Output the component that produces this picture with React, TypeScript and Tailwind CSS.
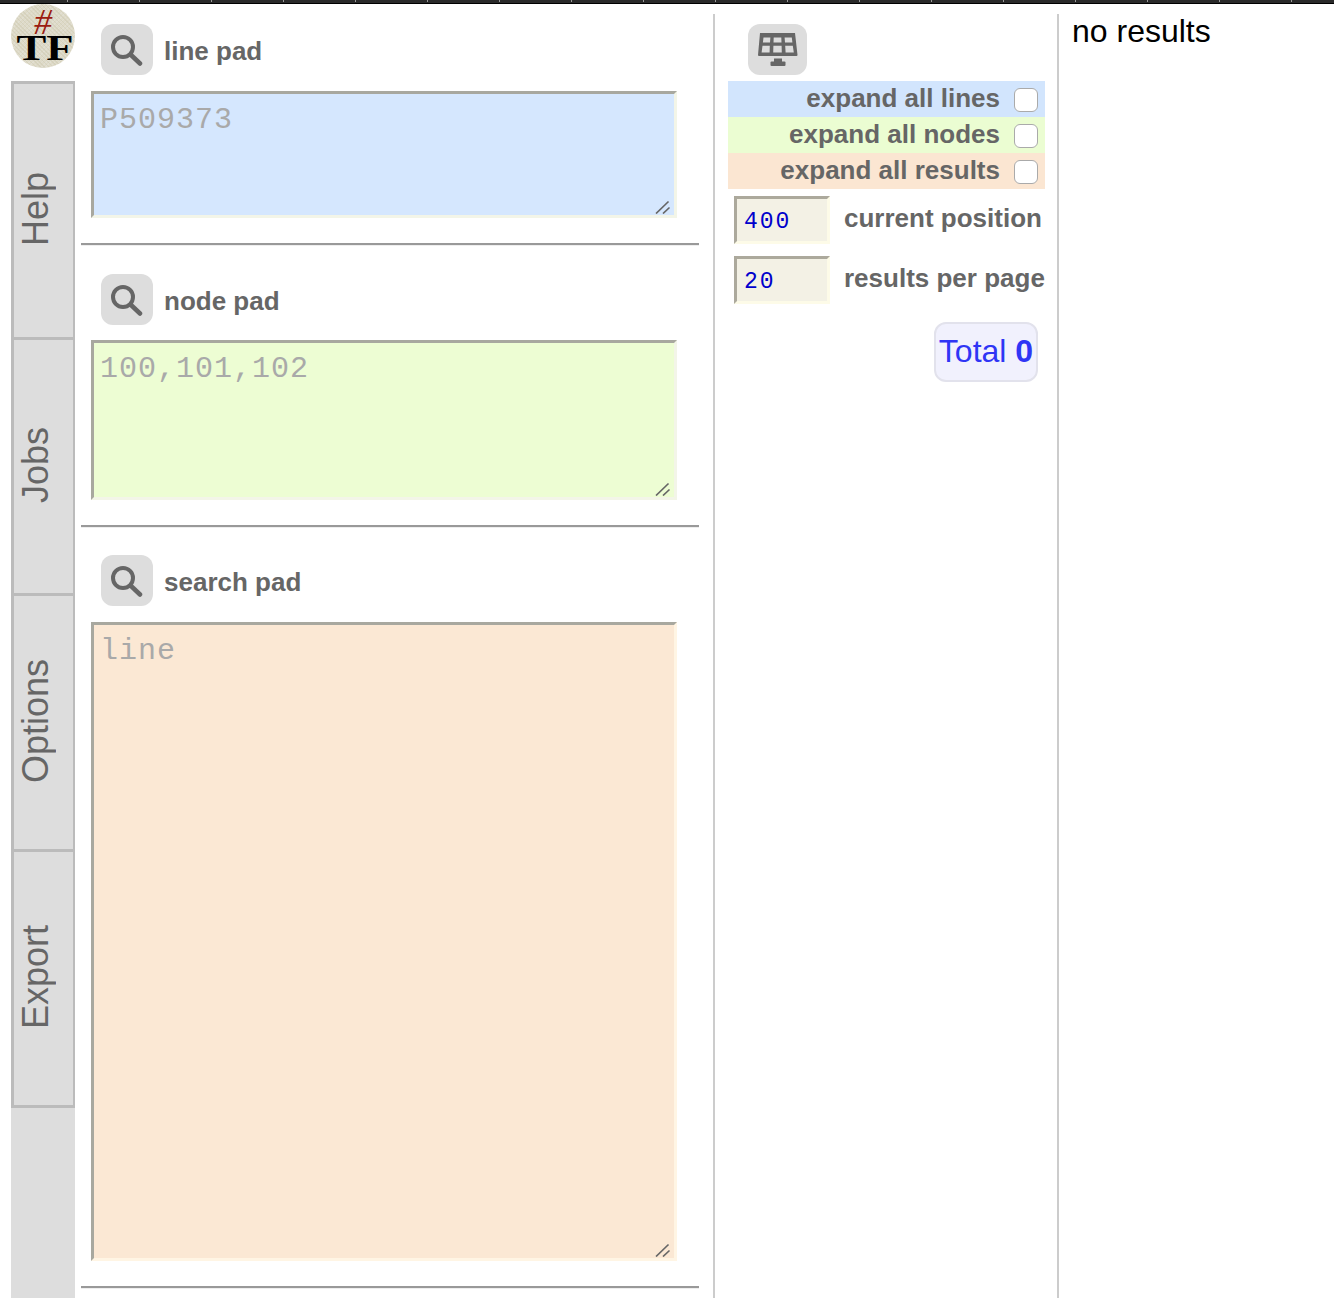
import React from 'react';

const TABS = ['Help', 'Jobs', 'Options', 'Export'];
const TICKS = Array.from({ length: 18 }, (_, i) => 67 + i * 72);

function SearchIcon() {
  return (
    <svg viewBox="0 0 32 32" className="w-[32px] h-[32px]" fill="none" stroke="#666">
      <circle cx="12" cy="13" r="10" strokeWidth="4" />
      <path d="M19.5 20.5 L29 29.5" strokeWidth="4.5" strokeLinecap="round" />
    </svg>
  );
}

function PanelIcon() {
  return (
    <svg viewBox="0 0 40 34" className="w-[40px] h-[34px]" fill="#666">
      <path fillRule="evenodd" d="M2 0 H37 L39.5 22 Q39.5 23 38.5 23 H1 Q0 23 0 22 Z M5.5 4.5 L4.9 9.5 H12 L12.4 4.5 Z M15.7 4.5 L15.5 9.5 H23.5 L23.3 4.5 Z M26.6 4.5 L27 9.5 H34.4 L33.8 4.5 Z M4.5 12.8 L3.6 19.5 H11.6 L11.8 12.8 Z M15.4 12.8 L15.2 19.5 H23.8 L23.6 12.8 Z M27.2 12.8 L27.6 19.5 H35.8 L34.8 12.8 Z" />
      <rect x="16" y="25.5" width="8" height="3.5" />
      <rect x="12.5" y="28.5" width="15" height="4.5" rx="1" />
    </svg>
  );
}

function ResizeGrip() {
  return (
    <svg viewBox="0 0 16 14" className="absolute right-[6px] bottom-[4px] w-[16px] h-[14px] pointer-events-none" fill="none" stroke="#666" strokeWidth="1.7">
      <path d="M1 13.5 L13.5 1.5" />
      <path d="M8 13.5 L14.5 7.5" />
    </svg>
  );
}

function Logo() {
  return (
    <div className="relative w-[64px] h-[64px] rounded-full bg-[repeating-linear-gradient(45deg,#cdc9b080_0px,#cdc9b080_1px,transparent_1px,transparent_3px),repeating-linear-gradient(-45deg,#c4bfa580_0px,#c4bfa580_1px,#dedac8_1px,#dedac8_3px)] flex justify-center">
      <span className="absolute top-[6px] text-[36px] leading-[24px] italic text-[#9b1c10] font-['Liberation_Serif',serif]">#</span>
      <span className="absolute top-[32px] left-[11px] text-[36px] leading-[24px] font-bold text-black scale-x-[1.24] font-['Liberation_Serif',serif]">TF</span>
    </div>
  );
}

function Pad({ label, placeholder, box }: { label: string; placeholder: string; box: string }) {
  return (
    <section>
      <div className="flex items-start h-[52px] pl-[20px] gap-[11px]">
        <button className="w-[52px] h-[51px] rounded-[12px] bg-[#ddd] flex items-center justify-center">
          <SearchIcon />
        </button>
        <span className="mt-[13px] text-[26px] leading-[28px] font-bold text-[#666] font-['Liberation_Sans',sans-serif]">{label}</span>
      </div>
      <div className="relative ml-[10px] w-[586px]">
        <textarea
          placeholder={placeholder}
          className={`block w-full ${box} border-[3px] border-solid border-t-[#a8a89f] border-l-[#a8a89f] px-[6px] py-[10px] text-[30px] leading-[33px] font-['Liberation_Mono',monospace] tracking-[1px] placeholder:text-[#a9a9a9] outline-none resize-none`}
        />
        <ResizeGrip />
      </div>
      <div className="mt-[25px] w-[618px] h-[3px] border-t-2 border-t-[#999] border-b border-b-[#eee]" />
    </section>
  );
}

function Expand({ label, bg }: { label: string; bg: string }) {
  return (
    <label className={`flex items-center justify-end h-[36px] ${bg}`}>
      <span className="text-[26px] leading-none font-bold text-[#666] font-['Liberation_Sans',sans-serif] mt-[-3px]">{label}</span>
      <span className="ml-[14px] mr-[7px] mt-[2px] w-[24px] h-[24px] rounded-[6px] bg-white border border-[#aaa] block" />
    </label>
  );
}

function Field({ value, label }: { value: string; label: string }) {
  return (
    <div className="flex items-start h-[60px] pl-[6px]">
      <input
        readOnly
        value={value}
        className="w-[96px] h-[48px] bg-[#f3f1e5] border-[3px] border-solid border-t-[#aca99c] border-l-[#aca99c] border-r-[#fdfbe8] border-b-[#fdfbe8] pl-[7px] pt-[3px] text-[23px] text-[#0000cc] font-['Liberation_Mono',monospace] tracking-[2px] outline-none"
      />
      <span className="ml-[14px] mt-[7px] text-[26px] leading-[30px] font-bold text-[#666] whitespace-nowrap font-['Liberation_Sans',sans-serif]">{label}</span>
    </div>
  );
}

export default function App() {
  return (
    <div className="relative w-[1334px] h-[1298px] overflow-hidden bg-white">
      {/* ruler strip along the top */}
      <div className="absolute top-0 left-0 w-full h-[4px] bg-[#2a2a2a] border-b border-b-black">
        {TICKS.map((x) => (
          <span key={x} className="absolute top-0 w-px h-[2px] bg-[#999]" style={{ left: x }} />
        ))}
      </div>

      <div className="flex h-full">
        {/* side tabs */}
        <nav className="w-[64px] ml-[11px] shrink-0 flex flex-col">
          <div className="h-[81px] pt-[4px]">
            <Logo />
          </div>
          <div className="flex-1 bg-[#ddd]">
            {TABS.map((tab) => (
              <div key={tab} className="h-[256px] border-[3px] border-r-[2px] border-b-0 last:border-b-[3px] last:h-[259px] border-[#bbb] flex items-center justify-center">
                <span className="[writing-mode:vertical-rl] rotate-180 text-[36px] leading-none text-[#666] font-['Liberation_Sans',sans-serif] mr-[16px] mb-[2px]">{tab}</span>
              </div>
            ))}
          </div>
        </nav>

        {/* pads */}
        <main className="w-[632px] ml-[6px] pt-[24px] shrink-0">
          <Pad label="line pad" placeholder="P509373" box="mt-[15px] h-[127px] bg-[#d5e7fe] border-r-[#f3f5e8] border-b-[#f3f5e8]" />
          <div className="h-[28px]" />
          <Pad label="node pad" placeholder="100,101,102" box="mt-[14px] h-[160px] bg-[#edfdd3] border-r-[#f3f5e8] border-b-[#f3f5e8]" />
          <div className="h-[27px]" />
          <Pad label="search pad" placeholder="line" box="mt-[15px] h-[639px] bg-[#fbe8d4] border-r-[#fff5e4] border-b-[#fff5e4]" />
        </main>

        {/* controls */}
        <aside className="w-[346px] mt-[14px] shrink-0 border-l-2 border-l-[#ccc] border-r-2 border-r-[#ccc] pl-[13px] pr-[12px]">
          <div className="pt-[10px] pl-[20px]">
            <button className="w-[59px] h-[51px] rounded-[12px] bg-[#ddd] flex items-center justify-center">
              <PanelIcon />
            </button>
          </div>
          <div className="mt-[6px]">
            <Expand label="expand all lines" bg="bg-[#d2e5fd]" />
            <Expand label="expand all nodes" bg="bg-[#ebfdd2]" />
            <Expand label="expand all results" bg="bg-[#fbe6d2]" />
          </div>
          <div className="mt-[7px]">
            <Field value="400" label="current position" />
            <Field value="20" label="results per page" />
          </div>
          <div className="flex justify-end mt-[6px] pr-[7px]">
            <div className="w-[104px] h-[60px] rounded-[12px] bg-[#f1f1fd] border-2 border-[#e2e2ec] pb-[2px] flex items-center justify-center text-[32px] text-[#2f35f5] font-['Liberation_Sans',sans-serif] whitespace-nowrap">
              Total&nbsp;<b>0</b>
            </div>
          </div>
        </aside>

        {/* results */}
        <div className="pl-[13px] pt-[12px] text-[32px] leading-[38px] text-black font-['Liberation_Sans',sans-serif]">no results</div>
      </div>
    </div>
  );
}
